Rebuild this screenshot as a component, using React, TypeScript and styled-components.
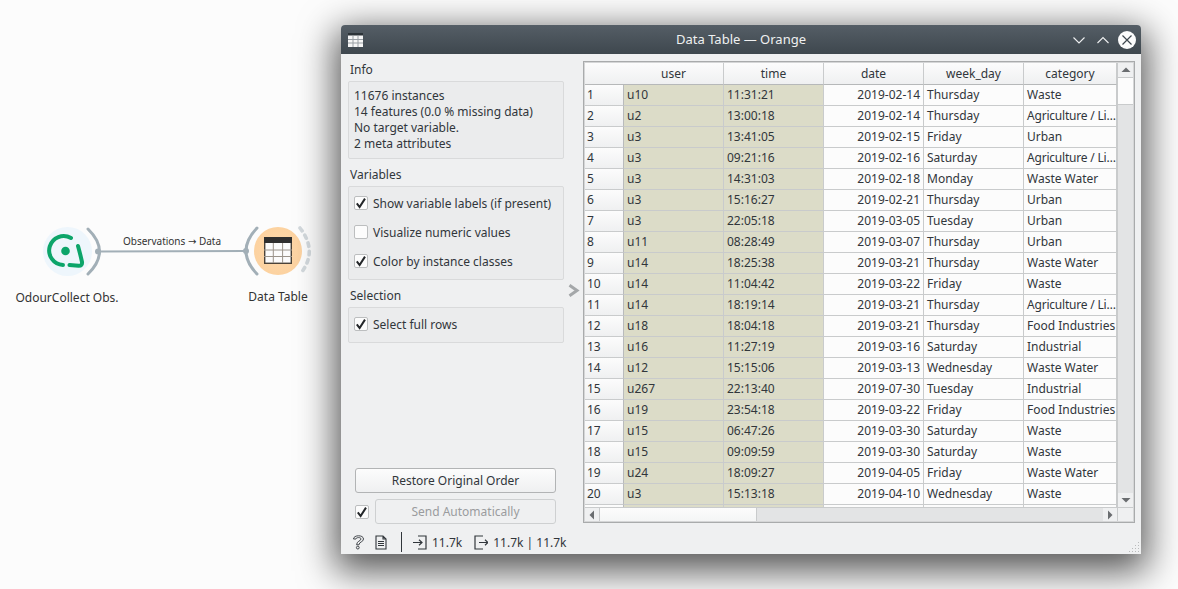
import React from 'react';
import styled, { createGlobalStyle } from 'styled-components';

const GlobalStyle = createGlobalStyle`
  html, body {
    margin: 0;
    padding: 0;
    background: #fcfcfc;
    overflow: hidden;
  }
  body {
    font-family: "Noto Sans", "Open Sans", sans-serif;
    font-size: 12px;
    color: #31363b;
  }
`;

const Canvas = styled.div`
  position: relative;
  width: 1178px;
  height: 589px;
  overflow: hidden;
  background: #fcfcfc;
`;

const Scheme = styled.svg`
  position: absolute;
  left: 30px;
  top: 215px;
`;

const NodeLabel = styled.div<{ $x: number; $y: number }>`
  position: absolute;
  left: ${(p) => p.$x}px;
  top: ${(p) => p.$y}px;
  transform: translateX(-50%);
  white-space: nowrap;
  line-height: 17px;
  font-size: 12px;
  color: #333;
`;

const LinkLabel = styled(NodeLabel)`
  font-size: 10px;
  line-height: 14px;
`;

const LinkArrow = styled.span`
  font-family: "DejaVu Sans", sans-serif;
  font-size: 10px;
`;

const Window = styled.div`
  position: absolute;
  left: 341px;
  top: 25px;
  width: 800px;
  height: 529px;
  display: flex;
  flex-direction: column;
  background: #eff0f1;
  border-radius: 4px 4px 0 0;
  box-shadow: 0 11px 36px 6px rgba(0, 0, 0, 0.66);
`;

const TitleBar = styled.header`
  height: 29px;
  flex: none;
  display: grid;
  grid-template-columns: 98px 1fr 100px;
  align-items: center;
  padding: 0 5px 0 7px;
  box-sizing: border-box;
  border-radius: 4px 4px 0 0;
  background: linear-gradient(#555e66, #3e474e);
  color: #eff0f1;
`;

const Title = styled.div`
  text-align: center;
  font-size: 13px;
  line-height: 18px;
  margin-bottom: 2px;
`;

const TitleButtons = styled.div`
  display: flex;
  justify-content: flex-end;
  align-items: center;
  gap: 6px;
`;

const Body = styled.div`
  flex: 1;
  min-height: 0;
  display: flex;
  padding: 6px 6px 0 7px;
`;

const Side = styled.aside`
  width: 216px;
  flex: none;
  display: flex;
  flex-direction: column;
  height: 464px;
`;

const SectionTitle = styled.div`
  height: 18px;
  line-height: 20px;
  margin: 0 0 3px 2px;
`;

const Box = styled.div<{ $h: number }>`
  height: ${(p) => p.$h}px;
  box-sizing: border-box;
  background: #ebeced;
  border: 1px solid #d9dadb;
  border-radius: 2px;
  margin-bottom: 6px;
  padding: 0 6px;
  display: flex;
  flex-direction: column;
  justify-content: center;
`;

const InfoLine = styled.div`
  line-height: 16px;
  margin-left: -1px;
  white-space: nowrap;
`;

const CheckList = styled(Box)`
  gap: 12px;
  padding-bottom: 2px;
`;

const CheckRow = styled.label`
  display: flex;
  align-items: center;
  gap: 5px;
  height: 17px;
  margin-left: -1px;
  white-space: nowrap;
`;

const CheckBox = styled.span`
  width: 14px;
  height: 14px;
  flex: none;
  box-sizing: border-box;
  display: flex;
  align-items: center;
  justify-content: center;
  background: #fcfcfc;
  border: 1px solid #bcbebf;
  border-radius: 2px;
`;

const Actions = styled.div`
  margin-top: auto;
  margin-left: 7px;
  width: 201px;
  display: flex;
  flex-direction: column;
  gap: 6px;
`;

const PushButton = styled.button<{ $disabled?: boolean }>`
  height: 25px;
  flex: 1;
  padding: 0;
  font: inherit;
  color: ${(p) => (p.$disabled ? '#9a9c9e' : '#31363b')};
  background: ${(p) => (p.$disabled ? '#eff0f1' : 'linear-gradient(#fcfcfc, #eff0f1)')};
  border: 1px solid ${(p) => (p.$disabled ? '#ced0d1' : '#b2b4b5')};
  border-radius: 3px;
`;

const SendRow = styled.div`
  display: flex;
  align-items: center;
  gap: 6px;
`;

const Splitter = styled.div`
  width: 19px;
  flex: none;
  height: 461px;
  display: flex;
  align-items: center;
  justify-content: center;
`;

const TableFrame = styled.div`
  width: 552px;
  height: 462px;
  margin-top: 1px;
  box-sizing: border-box;
  border: 1px solid #a9abac;
  padding: 1px;
  background: #d5d6d7;
  display: grid;
  grid-template-columns: 532px 16px;
  grid-template-rows: 444px 14px;
`;

const Viewport = styled.div`
  overflow: hidden;
  background: #fcfcfc;
`;

const Row = styled.div`
  display: grid;
  grid-template-columns: 39px 100px 100px 100px 100px 93px;
  height: 21px;
`;

const HeaderRow = styled(Row)`
  height: 22px;
`;

const HeaderCell = styled.div`
  box-sizing: border-box;
  text-align: center;
  line-height: 21px;
  border-right: 1px solid #c9cbcc;
  border-bottom: 1px solid #b6b8b9;
  background: linear-gradient(#fcfcfc, #eff0f1);
`;

const HeaderCorner = styled(HeaderCell)`
  border-right: none;
`;

const RowHead = styled.div`
  box-sizing: border-box;
  padding-left: 2px;
  line-height: 20px;
  border-right: 1px solid #b9bbbc;
  border-bottom: 1px solid #c9cbcc;
  background: linear-gradient(#fcfcfc, #eff0f1);
`;

const Cell = styled.div<{ $meta?: boolean; $right?: boolean; $tight?: boolean }>`
  box-sizing: border-box;
  padding: ${(p) => (p.$right ? '0 3px 0 0' : '0 0 0 3px')};
  line-height: 20px;
  white-space: nowrap;
  overflow: hidden;
  letter-spacing: ${(p) => (p.$tight ? '-0.2px' : 'normal')};
  text-align: ${(p) => (p.$right ? 'right' : 'left')};
  background: ${(p) => (p.$meta ? '#dcdcc8' : '#fcfcfc')};
  border-right: 1px solid #c9cbcc;
  border-bottom: 1px solid #c9cbcc;
`;

const ScrollV = styled.div`
  display: flex;
  flex-direction: column;
  border-left: 1px solid #c9cbcc;
  background: #e3e4e5;
`;

const ScrollH = styled.div`
  display: flex;
  border-top: 1px solid #c9cbcc;
  background: #e3e4e5;
`;

const Corner = styled.div`
  background: #eff0f1;
  border-left: 1px solid #c9cbcc;
  border-top: 1px solid #c9cbcc;
`;

const ScrollStep = styled.div<{ $w: number; $h: number }>`
  width: ${(p) => (p.$w ? `${p.$w}px` : 'auto')};
  height: ${(p) => (p.$h ? `${p.$h}px` : 'auto')};
  box-sizing: border-box;
  flex: none;
  display: flex;
  align-items: center;
  justify-content: center;
  background: #eff0f1;
`;

const ThumbV = styled.div`
  height: 26px;
  flex: none;
  background: #fcfcfc;
  border-top: 1px solid #c9cbcc;
  border-bottom: 1px solid #c9cbcc;
`;

const ThumbH = styled.div`
  width: 156px;
  flex: none;
  background: linear-gradient(#fcfcfc, #f4f5f5);
  border-left: 1px solid #c9cbcc;
  border-right: 1px solid #c9cbcc;
`;

const Track = styled.div`
  flex: 1;
`;

const StatusBar = styled.footer`
  height: 24px;
  flex: none;
  display: flex;
  align-items: center;
  padding-left: 11px;
  box-sizing: border-box;
  position: relative;
`;

const StatusIcon = styled.svg<{ $gap: number }>`
  flex: none;
  margin-right: ${(p) => p.$gap}px;
  color: #31363b;
`;

const Divider = styled.div`
  width: 1px;
  height: 20px;
  background: #31363b;
  margin: 0 11px 0 14px;
`;

const StatusText = styled.span`
  margin: 0 12px 0 5px;
  white-space: nowrap;
`;

const Grip = styled.svg`
  position: absolute;
  right: 1px;
  bottom: 1px;
`;

const columns = ['user', 'time', 'date', 'week_day', 'category'];

const rows: string[][] = [
  ['u10', '11:31:21', '2019-02-14', 'Thursday', 'Waste'],
  ['u2', '13:00:18', '2019-02-14', 'Thursday', 'Agriculture / Li…'],
  ['u3', '13:41:05', '2019-02-15', 'Friday', 'Urban'],
  ['u3', '09:21:16', '2019-02-16', 'Saturday', 'Agriculture / Li…'],
  ['u3', '14:31:03', '2019-02-18', 'Monday', 'Waste Water'],
  ['u3', '15:16:27', '2019-02-21', 'Thursday', 'Urban'],
  ['u3', '22:05:18', '2019-03-05', 'Tuesday', 'Urban'],
  ['u11', '08:28:49', '2019-03-07', 'Thursday', 'Urban'],
  ['u14', '18:25:38', '2019-03-21', 'Thursday', 'Waste Water'],
  ['u14', '11:04:42', '2019-03-22', 'Friday', 'Waste'],
  ['u14', '18:19:14', '2019-03-21', 'Thursday', 'Agriculture / Li…'],
  ['u18', '18:04:18', '2019-03-21', 'Thursday', 'Food Industries'],
  ['u16', '11:27:19', '2019-03-16', 'Saturday', 'Industrial'],
  ['u12', '15:15:06', '2019-03-13', 'Wednesday', 'Waste Water'],
  ['u267', '22:13:40', '2019-07-30', 'Tuesday', 'Industrial'],
  ['u19', '23:54:18', '2019-03-22', 'Friday', 'Food Industries'],
  ['u15', '06:47:26', '2019-03-30', 'Saturday', 'Waste'],
  ['u15', '09:09:59', '2019-03-30', 'Saturday', 'Waste'],
  ['u24', '18:09:27', '2019-04-05', 'Friday', 'Waste Water'],
  ['u3', '15:13:18', '2019-04-10', 'Wednesday', 'Waste'],
  ['', '', '', '', ''],
];

const Tick = () => (
  <svg width="12" height="12" viewBox="0 0 12 12">
    <path d="M1.8 6.4 L4.6 10 L10 1.6" fill="none" stroke="#232629" strokeWidth="2" />
  </svg>
);

const Check = ({ on, children }: { on: boolean; children: React.ReactNode }) => (
  <CheckRow>
    <CheckBox>{on && <Tick />}</CheckBox>
    {children}
  </CheckRow>
);

const Triangle = ({ dir }: { dir: 'up' | 'down' | 'left' | 'right' }) => {
  const points = {
    up: '0.5,7 5,2.5 9.5,7',
    down: '0.5,3 5,7.5 9.5,3',
    left: '7,0.5 2.5,5 7,9.5',
    right: '3,0.5 7.5,5 3,9.5',
  }[dir];
  return (
    <svg width="10" height="10" viewBox="0 0 10 10">
      <polygon points={points} fill="#6a6d70" />
    </svg>
  );
};

const OdourLogo = () => (
  <g>
    <circle cx="37.5" cy="36.5" r="24.5" fill="#eef6fc" />
    <circle cx="35.5" cy="36" r="4.3" fill="#0ca56a" />
    <path
      d="M 41 23 A 14.5 14.5 0 1 0 33 50"
      fill="none"
      stroke="#0ca56a"
      strokeWidth="4"
      strokeLinecap="round"
    />
    <path
      d="M 48 31 Q 50.5 40 52 47 Q 52.5 51 48.5 50.8 L 39.5 50"
      fill="none"
      stroke="#0ca56a"
      strokeWidth="4"
      strokeLinecap="round"
    />
  </g>
);

const TableGlyph = () => (
  <g>
    <rect x="234.7" y="22.7" width="26.6" height="25.6" fill="#fbfbfb" stroke="#4a4238" strokeWidth="1.4" />
    <rect x="234" y="22" width="28" height="6" fill="#2e2e2e" />
    <path
      d="M234 35 H262 M234 41.5 H262 M243.3 28 V48 M252.6 28 V48"
      stroke="#9a938a"
      strokeWidth="1"
      fill="none"
    />
  </g>
);

const CanvasDrawing = () => (
  <Scheme width="300" height="75" viewBox="0 0 300 75">
    <defs>
      <radialGradient id="orange" cx="50%" cy="50%" r="50%">
        <stop offset="0%" stopColor="#fdd9ad" />
        <stop offset="100%" stopColor="#fcd2a0" />
      </radialGradient>
    </defs>
    <path d="M68 36.5 L216 36" stroke="#a2afb7" strokeWidth="2.2" fill="none" />
    <path
      d="M58 14 Q81 36.5 58 59"
      stroke="#a2afb7"
      strokeWidth="3"
      fill="none"
      strokeLinecap="round"
    />
    <circle cx="68" cy="36.5" r="3" fill="#a2afb7" />
    <circle cx="216" cy="36" r="3" fill="#a2afb7" />
    <path
      d="M227 13 Q205 36 227 59"
      stroke="#a2afb7"
      strokeWidth="3"
      fill="none"
      strokeLinecap="round"
    />
    <path
      d="M270 13 Q288 36 271 58"
      stroke="#d3d9dd"
      strokeWidth="3.6"
      strokeDasharray="3.5 5"
      fill="none"
      strokeLinecap="round"
    />
    <OdourLogo />
    <circle cx="248" cy="36" r="24" fill="url(#orange)" />
    <TableGlyph />
  </Scheme>
);

const WindowIcon = () => (
  <svg width="15" height="14" viewBox="0 0 15 14">
    <rect x="0" y="0" width="15" height="14" fill="#f6f6f6" />
    <rect x="0" y="0" width="15" height="2.5" fill="#2c3338" />
    <path d="M0 6.5 H15 M0 10 H15 M5 2.5 V14 M10 2.5 V14" stroke="#9aa0a5" strokeWidth="1" fill="none" />
  </svg>
);

const TitleChevron = ({ up }: { up?: boolean }) => (
  <svg width="18" height="18" viewBox="0 0 18 18">
    <path
      d={up ? 'M3.5 12 L9 6.5 L14.5 12' : 'M3.5 6.5 L9 12 L14.5 6.5'}
      fill="none"
      stroke="#eff0f1"
      strokeWidth="1.1"
    />
  </svg>
);

const CloseButton = () => (
  <svg width="18" height="18" viewBox="0 0 18 18">
    <circle cx="9" cy="9" r="9" fill="#fcfcfc" />
    <path d="M4.5 4.5 L13.5 13.5 M13.5 4.5 L4.5 13.5" stroke="#3e474e" strokeWidth="1.2" />
  </svg>
);

const SplitChevron = () => (
  <svg width="12" height="13" viewBox="0 0 12 13">
    <path d="M1.5 1.2 L9 6.5 L1.5 11.8" fill="none" stroke="#a4a7a9" strokeWidth="3" />
  </svg>
);

const HelpIcon = () => (
  <StatusIcon $gap={10} width="13" height="16" viewBox="0 0 13 16" fill="none" stroke="currentColor">
    <path d="M1.5 5 C1.5 0.8 11.5 0.6 11.5 5 C11.5 8 7 7.8 7 10.8 H4.6 C4.6 7 9 7 9 5 C9 3 4 3.2 4 5 Z" strokeWidth="0.9" />
    <circle cx="5.8" cy="13.6" r="1.4" strokeWidth="0.9" />
  </StatusIcon>
);

const DocIcon = () => (
  <StatusIcon $gap={0} width="12" height="15" viewBox="0 0 12 15" fill="none" stroke="currentColor" strokeWidth="1.1">
    <path d="M1 1 H8 L11 4 V14 H1 Z M8 1 V4 H11 M3 6.5 H9 M3 8.5 H9 M3 10.5 H9" />
  </StatusIcon>
);

const InputIcon = () => (
  <StatusIcon $gap={0} width="14" height="15" viewBox="0 0 14 15" fill="none" stroke="currentColor" strokeWidth="1.2">
    <path d="M5 1 H13 V14 H5 M0 7.5 H8.5 M6 4.8 L9 7.5 L6 10.2" />
  </StatusIcon>
);

const OutputIcon = () => (
  <StatusIcon $gap={0} width="14" height="15" viewBox="0 0 14 15" fill="none" stroke="currentColor" strokeWidth="1.2">
    <path d="M9 1 H1 V14 H9 M5 7.5 H13.5 M11 4.8 L14 7.5 L11 10.2" />
  </StatusIcon>
);

const App = (): JSX.Element => (
  <Canvas>
    <GlobalStyle />
    <CanvasDrawing />
    <LinkLabel $x={172} $y={234}>Observations <LinkArrow>→</LinkArrow> Data</LinkLabel>
    <NodeLabel $x={67} $y={289}>OdourCollect Obs.</NodeLabel>
    <NodeLabel $x={278} $y={288}>Data Table</NodeLabel>

    <Window>
      <TitleBar>
        <WindowIcon />
        <Title>Data Table — Orange</Title>
        <TitleButtons>
          <TitleChevron />
          <TitleChevron up />
          <CloseButton />
        </TitleButtons>
      </TitleBar>

      <Body>
        <Side>
          <SectionTitle>Info</SectionTitle>
          <Box $h={78}>
            <InfoLine>11676 instances</InfoLine>
            <InfoLine>14 features (0.0 % missing data)</InfoLine>
            <InfoLine>No target variable.</InfoLine>
            <InfoLine>2 meta attributes</InfoLine>
          </Box>
          <SectionTitle>Variables</SectionTitle>
          <CheckList $h={94}>
            <Check on>Show variable labels (if present)</Check>
            <Check on={false}>Visualize numeric values</Check>
            <Check on>Color by instance classes</Check>
          </CheckList>
          <SectionTitle>Selection</SectionTitle>
          <CheckList $h={36}>
            <Check on>Select full rows</Check>
          </CheckList>
          <Actions>
            <SendRow>
              <PushButton>Restore Original Order</PushButton>
            </SendRow>
            <SendRow>
              <CheckBox><Tick /></CheckBox>
              <PushButton $disabled>Send Automatically</PushButton>
            </SendRow>
          </Actions>
        </Side>

        <Splitter>
          <SplitChevron />
        </Splitter>

        <TableFrame>
          <Viewport>
            <HeaderRow>
              <HeaderCorner />
              {columns.map((name) => (
                <HeaderCell key={name}>{name}</HeaderCell>
              ))}
            </HeaderRow>
            {rows.map((row, i) => (
              <Row key={i}>
                <RowHead>{i + 1 <= 20 ? i + 1 : ''}</RowHead>
                <Cell $meta>{row[0]}</Cell>
                <Cell $meta>{row[1]}</Cell>
                <Cell $right>{row[2]}</Cell>
                <Cell>{row[3]}</Cell>
                <Cell $tight={row[4].endsWith('…')}>{row[4]}</Cell>
              </Row>
            ))}
          </Viewport>
          <ScrollV>
            <ScrollStep $w={0} $h={14}><Triangle dir="up" /></ScrollStep>
            <ThumbV />
            <Track />
            <ScrollStep $w={0} $h={14}><Triangle dir="down" /></ScrollStep>
          </ScrollV>
          <ScrollH>
            <ScrollStep $w={14} $h={0}><Triangle dir="left" /></ScrollStep>
            <ThumbH />
            <Track />
            <ScrollStep $w={14} $h={0}><Triangle dir="right" /></ScrollStep>
          </ScrollH>
          <Corner />
        </TableFrame>
      </Body>

      <StatusBar>
        <HelpIcon />
        <DocIcon />
        <Divider />
        <InputIcon />
        <StatusText>11.7k</StatusText>
        <OutputIcon />
        <StatusText>11.7k | 11.7k</StatusText>
        <Grip width="12" height="12" viewBox="0 0 12 12" fill="#b9bbbc">
          <rect x="10" y="1" width="1" height="1" />
          <rect x="10" y="4" width="1" height="1" />
          <rect x="7" y="4" width="1" height="1" />
          <rect x="10" y="7" width="1" height="1" />
          <rect x="7" y="7" width="1" height="1" />
          <rect x="4" y="7" width="1" height="1" />
          <rect x="10" y="10" width="1" height="1" />
          <rect x="7" y="10" width="1" height="1" />
          <rect x="4" y="10" width="1" height="1" />
          <rect x="1" y="10" width="1" height="1" />
        </Grip>
      </StatusBar>
    </Window>
  </Canvas>
);

export default App;
